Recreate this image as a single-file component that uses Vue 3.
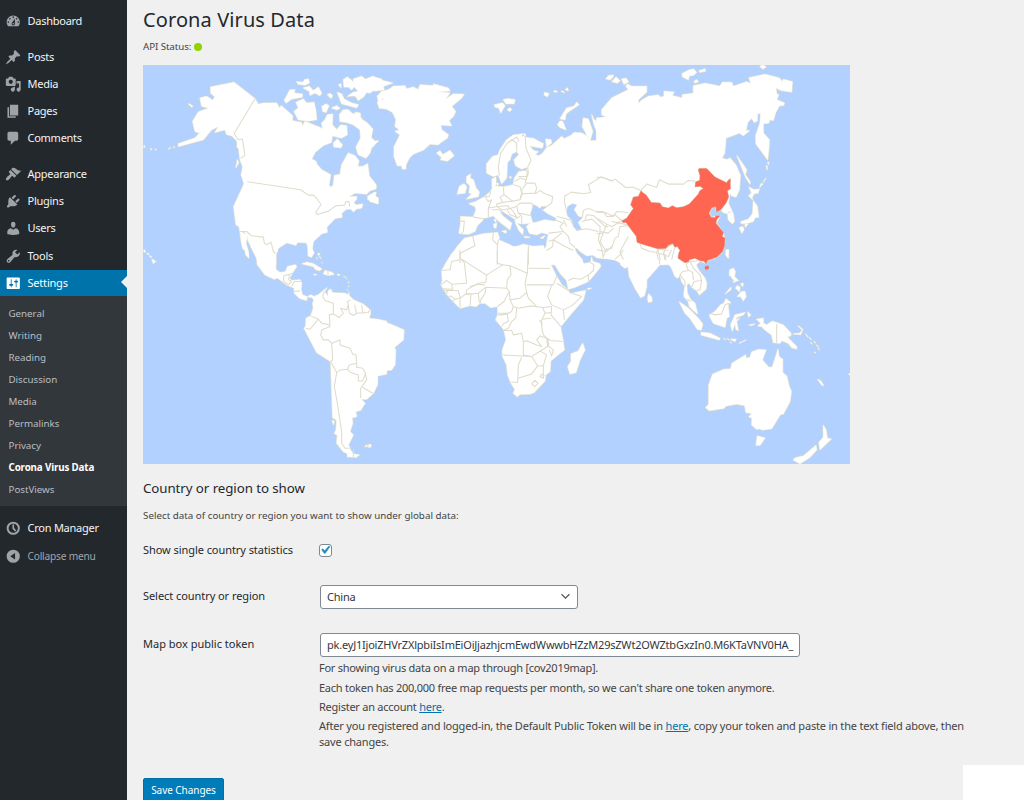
<script setup>
const icons = {
  dashboard: 'M3.76 16h12.48c1.1-1.37 1.76-3.11 1.76-5 0-4.42-3.58-8-8-8s-8 3.58-8 8c0 1.89.66 3.63 1.76 5zM10 4c.55 0 1 .45 1 1s-.45 1-1 1-1-.45-1-1 .45-1 1-1zM6 6c.55 0 1 .45 1 1s-.45 1-1 1-1-.45-1-1 .45-1 1-1zm8 0c.55 0 1 .45 1 1s-.45 1-1 1-1-.45-1-1 .45-1 1-1zm-5.37 5.55L12 7v6c0 1.1-.9 2-2 2s-2-.9-2-2c0-.57.24-1.08.63-1.45zM4 10c.55 0 1 .45 1 1s-.45 1-1 1-1-.45-1-1 .45-1 1-1zm12 0c.55 0 1 .45 1 1s-.45 1-1 1-1-.45-1-1 .45-1 1-1zm-5 3c0-.55-.45-1-1-1s-1 .45-1 1 .45 1 1 1 1-.45 1-1z',
  post: 'M10.44 3.02l1.82-1.82 6.36 6.35-1.83 1.82c-1.05-.68-2.48-.57-3.41.36l-.75.75c-.92.93-1.04 2.35-.35 3.41l-1.83 1.82-2.41-2.41-2.8 2.79c-.42.42-3.38 2.71-3.8 2.29s1.86-3.39 2.28-3.81l2.79-2.79L4.1 9.36l1.83-1.82c1.05.69 2.48.57 3.4-.36l.75-.75c.93-.92 1.05-2.35.36-3.41z',
  media: 'M13 11V4c0-.55-.45-1-1-1h-1.67L9 1H5L3.67 3H2c-.55 0-1 .45-1 1v7c0 .55.45 1 1 1h10c.55 0 1-.45 1-1zM7 4.5c1.38 0 2.5 1.12 2.5 2.5S8.38 9.5 7 9.5 4.5 8.38 4.5 7 5.62 4.5 7 4.5zM14 6h5v10.5c0 1.38-1.12 2.5-2.5 2.5S14 17.88 14 16.5s1.12-2.5 2.5-2.5c.17 0 .34.02.5.05V9h-3V6zm-4 8.05V13h2v3.5c0 1.38-1.12 2.5-2.5 2.5S7 17.88 7 16.5 8.12 14 9.5 14c.17 0 .34.02.5.05z',
  page: 'M6 15V2h10v13H6zm-1 1h8v2H3V5h2v11z',
  comment: 'M5 2h9c1.1 0 2 .9 2 2v7c0 1.1-.9 2-2 2h-2l-5 5v-5H5c-1.1 0-2-.9-2-2V4c0-1.1.9-2 2-2z',
  appearance: 'M14.48 11.06L7.41 3.99l1.5-1.5c.5-.56 2.3-.47 3.51.32 1.21.8 1.43 1.28 2.91 2.1 1.18.64 2.45 1.26 4.45.85zm-.71.71L6.7 4.7 4.93 6.47c-.39.39-.39 1.02 0 1.41l1.06 1.06c.39.39.39 1.03 0 1.42-.6.6-1.43 1.11-2.21 1.69-.35.26-.7.53-1.01.84C1.43 14.23.4 16.08 1.4 17.07c.99 1 2.84-.03 4.18-1.36.31-.31.58-.66.85-1.02.57-.78 1.08-1.61 1.69-2.21.39-.39 1.02-.39 1.41 0l1.06 1.06c.39.39 1.02.39 1.41 0z',
  plugin: 'M13.11 4.36L9.87 7.6 8 5.73l3.24-3.24c.35-.34 1.05-.2 1.56.32.52.51.66 1.21.31 1.55zm-8 1.77l.91-1.12 9.01 9.01-1.19.84c-.71.71-2.63 1.16-3.82 1.16H6.14L4.9 17.26c-.59.59-1.54.59-2.12 0-.59-.58-.59-1.53 0-2.12l1.24-1.24v-3.88c0-1.13.4-3.19 1.09-3.89zm7.26 3.97l3.24-3.24c.34-.35 1.04-.21 1.55.31.52.51.66 1.21.31 1.55l-3.24 3.25z',
  user: 'M10 9.25c-2.27 0-2.73-3.44-2.73-3.44C7 4.02 7.82 2 9.97 2c2.16 0 2.98 2.02 2.71 3.81 0 0-.41 3.44-2.68 3.44zm0 2.57L12.72 10c2.39 0 4.52 2.33 4.52 4.53v2.49s-3.65 1.13-7.24 1.13c-3.65 0-7.24-1.13-7.24-1.13v-2.49c0-2.25 1.94-4.48 4.47-4.48z',
  tools: 'M16.68 9.77c-1.34 1.34-3.3 1.67-4.95.99l-5.41 6.52c-.99.99-2.59.99-3.58 0s-.99-2.59 0-3.57l6.52-5.42c-.68-1.65-.35-3.61.99-4.95 1.28-1.28 3.12-1.62 4.72-1.06l-2.89 2.89 2.82 2.82 2.86-2.87c.53 1.58.18 3.39-1.08 4.65zM3.81 16.21c.4.39 1.04.39 1.43 0 .4-.4.4-1.04 0-1.43-.39-.4-1.03-.4-1.43 0-.39.39-.39 1.03 0 1.43z',
  settings: 'M18 16V4c0-.55-.45-1-1-1H3c-.55 0-1 .45-1 1v12c0 .55.45 1 1 1h14c.55 0 1-.45 1-1zM8 11h1c.55 0 1 .45 1 1s-.45 1-1 1H8v1.5c0 .28-.22.5-.5.5s-.5-.22-.5-.5V13H6c-.55 0-1-.45-1-1s.45-1 1-1h1V5.5c0-.28.22-.5.5-.5s.5.22.5.5V11zm5-2h-1c-.55 0-1-.45-1-1s.45-1 1-1h1V5.5c0-.28.22-.5.5-.5s.5.22.5.5V7h1c.55 0 1 .45 1 1s-.45 1-1 1h-1v5.5c0 .28-.22.5-.5.5s-.5-.22-.5-.5V9z',
  clock: 'M10 2a8 8 0 1 0 0 16 8 8 0 0 0 0-16zm0 2.4a5.6 5.6 0 1 1 0 11.2 5.6 5.6 0 0 1 0-11.2zM9 5.5h2v4l2.6 3.1-1.4 1.4-3.2-3.5z',
  collapse: 'M10 2a8 8 0 1 0 0 16 8 8 0 0 0 0-16zm2.2 4.2v7.6L6.4 10z',
}
const groups = [
  [{ icon: 'dashboard', label: 'Dashboard' }],
  [
    { icon: 'post', label: 'Posts' },
    { icon: 'media', label: 'Media' },
    { icon: 'page', label: 'Pages' },
    { icon: 'comment', label: 'Comments' },
  ],
  [
    { icon: 'appearance', label: 'Appearance' },
    { icon: 'plugin', label: 'Plugins' },
    { icon: 'user', label: 'Users' },
    { icon: 'tools', label: 'Tools' },
    { icon: 'settings', label: 'Settings', active: true },
  ],
]
const submenu = ['General', 'Writing', 'Reading', 'Discussion', 'Media', 'Permalinks', 'Privacy', 'Corona Virus Data', 'PostViews']

// The world map is drawn in six tiles; each tile's units are thirds of a pixel.
const tiles = [
  {
    x: 140, y: 60,
    land: [
      'M212,82 282,68 345,117 355,134 370,130 410,130 418,145 424,138 458,168 457,183 485,188 487,200 495,185 540,203 548,208 545,190 555,180 562,165 578,163 577,195 590,210 602,196 620,198 622,225 604,235 577,228 574,248 550,257 525,278 515,298 527,304 532,315 545,330 572,345 567,375 573,383 580,375 583,347 600,344 605,315 625,280 645,288 657,304 653,320 668,320 683,312 688,350 708,376 708,386 690,392 680,403 645,400 625,412 650,410 650,418 640,430 650,436 668,433 665,445 650,447 640,456 633,448 620,448 605,460 606,472 585,476 560,502 562,517 545,522 520,545 517,565 521,580 514,592 505,588 503,560 500,549 472,547 468,556 440,549 415,565 408,582 408,615 356,615 352,600 323,540 322,525 312,515 300,515 297,500 288,495 281,440 308,382 312,372 304,345 308,320 300,300 296,265 290,243 275,228 260,224 255,210 225,218 235,200 215,210 205,222 190,240 115,260 115,252 165,235 183,215 176,219 165,215 158,185 175,157 207,145 185,140 180,115 200,110 218,122 225,112 212,100z',
      'M300,515 304,548 308,565 315,572 318,585 326,594 325,580 318,550 322,525z',
      'M303,343 323,357 322,370 310,357z M292,300 296,308 288,324z M293,240 298,268 291,262z',
      'M145,132 157,138 156,143z M12,258 15,260 12,264z M32,267 36,268 32,270z M46,268 49,269 46,271z M86,267 92,264 86,268z M100,262 104,261 101,263z',
      'M470,66 490,68 493,60 505,58 508,70 495,76 475,74z M490,85 508,80 520,93 535,82 545,100 540,108 525,100 510,107 508,95z',
      'M433,122 450,90 465,90 462,100 487,103 487,112 455,118 438,130z M468,128 490,118 500,130 522,128 527,150 530,180 505,184 475,180 462,155 475,145z',
      'M562,105 570,101 578,108 573,116z M546,140 558,133 567,138 558,158 548,155z M575,145 590,138 600,146 590,150z',
      'M592,98 605,103 612,118 635,130 655,135 650,144 605,132z M596,75 603,72 603,84z M610,60 622,52 635,62 645,78 635,90 625,82 612,82z',
      'M640,58 665,50 680,62 700,52 725,58 725,90 705,88 690,100 680,98 670,112 655,122 645,108 622,110 640,98 655,95 640,78z',
      'M598,165 610,150 625,150 637,162 655,162 667,180 682,190 698,208 690,230 705,245 715,244 696,260 690,280 678,295 655,285 648,262 662,235 660,210 640,195 620,188 600,185z M645,158 660,160 662,168 650,166z',
      'M580,250 592,238 607,255 603,264 582,262z M682,418 708,397 706,410 715,415 714,432 698,424z',
      'M712,108 725,110 725,145 716,135z',
      'M12,570 16,574 13,576z M22,580 26,582 23,584z M30,588 34,591 31,592z M534,580 538,584 535,587z',
    ],
    borders: ['M345,117 L282,222 L295,240 L307,238 L315,286 L302,296', 'M322,366 L482,390 L505,406 L520,406 L530,416 L543,434 L527,458 L532,464 L565,454 L588,438 L614,436 L617,426 L627,425 L629,441', 'M300,515 L320,515 L335,528 L370,532 L373,550 L382,554 L393,547 L400,575 L408,581'],
  },
  {
    x: 370, y: 60,
    land: [
      'M-20,62 8,50 35,62 68,70 40,80 42,90 15,94 -10,85z M-20,195 0,200 8,210 3,235 15,245 24,243 8,262 -20,240z M-20,330 0,352 18,375 18,387 0,392 -20,400z M-8,410 15,397 14,410 24,415 24,432 0,425z',
      'M35,95 55,90 70,80 105,78 110,88 130,82 145,90 150,75 190,78 190,73 235,85 240,94 198,96 240,100 225,120 250,103 282,104 275,115 245,140 257,155 250,170 237,182 245,198 212,196 215,210 235,225 232,235 210,250 205,255 180,253 160,271 130,283 118,295 108,315 107,328 97,328 95,318 82,318 72,290 72,262 90,225 75,215 88,210 75,200 78,180 68,158 50,148 28,145 22,128 42,118 22,110z',
      'M200,280 210,273 218,285 240,272 252,288 232,304 212,300 215,293z',
      'M350,340 350,312 368,290 384,286 390,270 410,240 430,226 465,222 468,233 490,236 520,252 517,265 498,262 478,258 490,272 505,276 495,285 507,288 520,278 530,263 545,257 575,230 583,237 605,226 612,218 635,220 650,228 660,243 680,243 680,215 672,195 665,165 672,180 692,188 696,175 710,172 695,160 715,128 730,120 730,594 700,595 690,592 668,585 650,587 632,575 620,563 613,565 622,588 634,598 640,612 640,615 535,615 520,570 530,560 530,550 535,523 515,518 500,525 478,520 470,500 478,492 500,487 525,480 555,485 560,475 535,462 515,448 530,442 527,438 508,444 504,440 490,432 480,462 485,480 488,489 462,492 440,490 460,510 458,524 447,512 437,490 435,478 415,465 398,455 388,455 400,470 425,490 420,510 385,483 370,468 355,472 340,475 337,483 322,497 315,515 295,523 275,522 267,520 272,490 272,470 310,472 318,450 315,440 297,432 318,425 345,410 362,395 370,378 400,382 430,375 433,355 440,345 447,335 470,333 473,322 455,328 437,318 432,300 447,285 440,275 425,283 420,300 412,308 410,355 395,372 385,345 370,350z',
      'M366,382 366,358 378,352 378,375z M380,370 386,372 382,377z M438,350 443,344 447,352z M419,350 424,352 421,356z',
      'M655,178 640,175 637,200 650,225 660,243 668,215z',
      'M527,238 543,240 545,250 530,260z',
      'M290,350 302,343 300,355 310,360 318,385 328,397 325,410 290,418 305,402 297,398 300,378 290,368z M262,403 268,380 282,372 290,380 285,400z',
      'M373,135 398,130 405,138 392,160 387,145 375,142z M400,120 412,117 435,120 432,132 408,132z M412,150 420,144 425,150 418,155z',
      'M522,105 525,98 537,102 532,111z M551,96 556,92 562,97z M573,95 580,95 583,99z M586,90 592,84 595,93z',
      'M570,177 590,145 612,140 620,128 627,135 602,152 588,162 585,180z M563,195 570,184 578,185 588,210 570,203z',
      'M372,480 378,478 377,487z M371,493 380,490 378,505 372,503z M396,514 409,512 408,520z M463,529 480,532 465,534z M512,534 525,528 518,536z',
      'M708,57 722,50 722,60z',
      'M225,615 235,598 262,560 283,535 308,530 340,522 383,518 388,535 385,540 420,555 435,565 440,560 460,553 490,560 520,557 530,590 543,615z',
    ],
    seas: ['M590,455 593,440 607,432 620,435 612,450 625,470 638,473 624,488 635,508 620,512 610,500 606,482 592,468z', 'M513,440 530,442 515,452z'],
    borders: ['M388,347 L385,320 L392,280 L412,250 L425,240 L440,250 L440,275 M412,250 L440,232 L447,245 M455,230 L460,225 L466,232 L468,265 L483,302 L473,322', 'M272,484 L283,484 L280,515 L274,522 M310,472 L340,477', 'M345,410 L355,425 L365,420 L355,445 L380,440 L380,433 L398,428 L390,412 L402,405 L400,383 M362,395 L358,410 L345,410 M402,405 L428,424 L450,420 L455,400 L450,380 L430,375', 'M398,428 L415,425 L428,424 M385,440 L415,438 L418,447 L395,450 L380,440 M418,447 L440,440 L450,430 L485,430 L490,445 M440,440 L445,460 L485,468 M420,445 L430,455 L440,472 L420,465 L412,450 M445,460 L455,470 L455,490 M435,478 L450,470', 'M450,420 L457,402 L500,400 L510,392 L525,402 L548,410 L545,430 L530,440 M457,402 L455,390 L470,370 L495,370 L500,385 L495,402 M434,365 L450,355 L468,360 L472,340 L470,333 M445,350 L470,350', 'M473,322 L475,340 L465,370 M355,445 L355,472 M365,450 L385,450 L400,455', 'M590,455 L583,425 L585,408 L605,397 L640,402 L662,398 L655,375 L693,352 L730,364', 'M637,473 L640,452 L655,445 L680,457 L705,458 L730,470 M645,480 L650,465 L670,467 L705,500 L715,500 M635,485 L665,478 L690,500 L690,515 L715,520 L730,505 M690,515 L685,540 L695,565 L700,595 M620,512 L650,507 L685,515', 'M555,480 L580,490 L570,500 L580,515 L595,530 L600,550 L615,563 M535,520 L580,515 M560,470 L600,480 L610,495 M580,480 L590,500 M535,545 L550,540 L575,520 M550,540 L585,560 L610,572 M530,572 L548,560 L550,540', 'M308,530 L315,558 L270,580 L270,610 M370,518 L368,540 L382,555 L382,615 M385,540 L382,555 M475,558 L475,615'],
  },
  {
    x: 600, y: 60,
    land: [
      'M-10,175 20,172 5,165 5,150 35,115 85,90 78,80 82,73 95,80 140,80 140,97 115,120 115,132 125,122 145,110 175,106 182,113 192,110 192,95 222,97 217,108 247,115 247,105 280,101 280,78 315,71 360,80 367,68 395,68 400,80 440,66 453,72 447,54 495,44 538,55 548,66 550,59 577,66 575,97 542,92 528,84 530,103 536,105 530,120 553,130 551,137 538,138 527,158 520,182 510,180 506,190 490,192 490,220 508,240 507,262 503,300 468,253 467,228 480,190 482,160 472,163 472,183 463,188 455,175 443,188 438,212 448,213 430,228 418,220 378,235 374,280 366,295 380,300 390,295 408,316 421,347 418,390 408,412 395,408 390,400 385,430 400,463 403,485 397,492 385,480 383,462 370,458 362,450 350,455 345,440 335,445 328,460 335,473 350,468 360,468 350,490 370,520 375,545 368,575 350,592 322,602 318,610 300,603 288,614 75,615 62,613 60,608 45,600 15,595 -10,593z',
      'M246,42 265,32 280,28 290,38 280,47 268,48 265,60 248,52z M297,33 316,27 316,35 300,38z M282,65 290,60 295,66 285,70z M480,20 490,16 498,22 488,28z',
      'M18,58 25,48 40,46 38,54z M36,66 48,52 60,63 52,70z M65,58 78,56 86,66 72,74z',
      'M411,288 440,330 436,345 450,365 450,373 438,355z M447,382 462,390 478,388 474,400 462,402 456,413 458,420 446,408 455,400z M460,423 472,440 476,472 465,473 460,485 442,490 425,492 422,486 445,478 458,462z M418,504 428,500 432,508 426,520z M435,494 444,492 436,502z',
      'M497,356 490,368z M484,371 488,373 479,382z M503,308 507,308 505,314z M499,318 502,320 501,330z M379,572 386,570 383,594 377,585z',
    ],
    borders: ['M-10,353 L5,352 L35,364 L45,358 L78,384 L98,382 L123,392 L140,373 L170,383 L178,360 L205,373 L250,373 L265,362 L285,364', 'M362,452 L375,432 L385,415 M383,460 L392,455', 'M-10,455 L10,455 L20,470 L40,470 L50,455 L85,458 M30,468 L45,465 L60,478 L66,480 M-10,475 L20,493 L35,500 L45,495 L66,482 M20,493 L10,520 L-10,522 M10,520 L0,545 L15,570 L35,565 L45,535 L55,530 L60,500 L85,498 M35,485 L60,490 L80,495 M85,530 L60,575 L70,600', 'M120,553 L125,565 L150,575 L170,577 L175,567 M175,567 L195,567 L218,551 M170,577 L175,600 M190,575 L195,600 M178,568 L205,572 M218,551 L225,560 L215,600'],
    china: 'M66,483 80,475 100,446 92,435 100,412 115,410 123,393 130,400 138,405 154,428 180,430 187,441 205,445 217,438 230,444 250,441 268,433 295,403 300,392 310,387 302,380 285,381 287,366 299,362 300,348 295,330 297,326 320,326 345,352 380,369 384,362 391,357 391,388 382,393 386,411 378,430 362,450 350,457 347,440 335,444 327,460 333,472 345,474 347,468 360,468 350,480 348,490 370,518 367,530 375,535 374,555 368,575 350,592 322,602 318,612 312,604 300,603 285,595 268,600 266,606 255,609 234,595 236,580 240,572 232,560 225,562 218,551 205,556 198,565 173,567 120,551 111,547 109,530 85,498 78,488 68,488z M315,620 325,618 327,625 320,630 315,627z',
  },
  {
    x: 140, y: 250,
    land: [
      'M338,0 350,20 352,45 375,75 403,88 412,84 440,105 463,115 463,130 478,145 500,152 503,142 515,142 522,150 518,160 520,175 512,198 498,205 497,230 492,235 530,308 572,335 578,503 590,510 588,540 583,550 592,556 590,580 610,605 625,612 630,595 625,585 640,555 630,545 638,520 636,503 650,500 647,485 662,481 675,460 663,447 680,448 700,430 712,405 712,378 740,372 740,214 716,209 688,206 690,180 670,163 640,150 625,135 615,130 578,129 572,118 564,123 564,140 553,125 561,114 535,135 522,140 512,135 502,141 487,135 483,120 485,100 480,90 455,92 448,85 458,68 470,50 466,45 443,50 436,66 420,68 408,60 405,20 412,5 412,-10 333,-10z',
      'M314,-10 318,15 326,24 325,5 320,-10z M505,0 515,0 522,8 514,21 505,18z',
      'M486,42 500,37 520,42 545,57 540,62 528,60 520,50z M550,72 555,62 575,67 582,73 565,77z M521,73 530,74 524,76z M592,73 600,75 594,77z M625,132 628,134 624,135z',
      'M36,28 47,35 40,41z M12,2 16,7 12,6z M22,11 26,14z M29,19 34,21z M577,512 583,513 580,524z',
      'M622,610 630,598 640,612 658,615 648,622 622,620z M674,590 680,585 682,589z M684,592 693,584 690,590z',
      'M611,79 615,81z M618,84 620,87z M625,96 627,99z M625,108 627,110z M621,119 623,121z M626,127 628,130z M535,11 540,13z M530,24 532,27z M538,20 543,26z M545,38 547,40z',
    ],
    borders: ['M430,95 L432,78 L448,73 L458,70 M448,73 L446,90 L455,95 M432,95 L445,105 L455,95 M455,110 L463,95 L483,95 M463,125 L480,123 M500,152 L505,140 M564,62 L564,77', 'M553,125 L548,140 L555,152 L580,160 L580,192 L568,195 L570,230 L545,240 L542,255 L550,270 L565,270 L575,280 L578,330 L572,335', 'M512,198 L535,208 L510,238 L497,235 M535,208 L545,220 L570,225 M580,192 L597,203 L610,190 L602,175 L620,180 L625,165 L622,155 L632,150 M625,165 L628,190 L640,197 L650,190 L645,175 L645,165 M650,190 L685,188 L690,178 M665,165 L668,190', 'M575,280 L600,270 L600,285 L630,295 L638,312 L648,315 L650,340 L628,345 L622,358 L602,360 L590,368 L572,335 M590,368 L583,410 L592,460 L605,545 L605,580 L615,595 L628,595', 'M622,358 L632,368 L655,375 L655,393 L668,393 L677,370 L668,355 L650,352 L650,340 M677,375 L680,390 L662,415 L662,445 M668,412 L698,430 M640,598 L640,622'],
  },
  {
    x: 370, y: 250,
    land: [
      'M-20,207 15,208 60,222 102,240 100,270 73,293 77,300 75,345 65,360 45,362 22,378 22,403 8,430 -5,435 -20,350z M-6,584 3,584 2,592z M-6,180 1,180 1,196 -6,196z',
      'M262,0 245,12 235,30 215,62 217,92 213,105 228,130 245,150 270,175 300,167 318,170 330,160 345,160 362,173 383,170 383,195 377,210 390,225 402,240 408,270 397,300 397,318 410,345 413,375 423,400 435,418 430,430 442,440 450,433 480,432 492,428 525,393 527,375 540,365 542,333 560,318 583,300 578,265 573,240 572,230 605,190 640,150 647,122 630,125 600,132 592,118 575,105 560,80 540,40 525,10 520,-10 262,-10z',
      'M528,-10 525,5 540,20 555,45 570,70 590,92 595,118 615,112 655,95 675,72 692,50 690,42 668,35 665,22 662,38 640,42 636,28 620,10 610,-10z',
      'M615,-10 632,5 650,17 668,15 680,23 700,25 740,22 740,-10z',
      'M638,280 645,300 630,330 618,368 600,372 593,350 603,335 603,312 625,303z M652,116 664,115 656,119z',
    ],
    borders: ['M382,0 L382,40 L398,45 L350,75 L347,97 L325,100 L290,120 L288,132 L300,132 M270,0 L270,25 L350,76 M215,62 L240,60 L245,35 L270,30 M283,38 L290,100 L245,103 M283,38 L270,25 M398,45 L420,48 L472,70 L475,0 M475,55 L540,56 M420,48 L423,75 L412,90 L410,115 L348,112 L345,130 L332,150 L332,160', 'M213,105 L230,92 L245,103 L248,118 L218,117 M218,123 L235,122 L225,135 M235,122 L265,122 L270,145 L255,148 L242,138 L232,145 M255,148 L248,155 M288,132 L270,145 L270,175 M300,167 L303,132 L325,130 L328,160 M288,132 L303,132 M325,130 L348,112 M300,110 L325,103 L345,105', 'M410,115 L418,125 L402,155 L383,170 M418,125 L420,150 L430,170 M420,150 L450,145 L470,128 L465,100 L472,70 M470,128 L475,145 L498,168 M430,170 L445,175 L485,168 L518,173 L545,170 M383,190 L415,190 L425,185 L430,170 M383,195 L395,195 L412,192 L415,215 L402,220 L395,230 M440,175 L437,205 L425,215 L415,235 L402,240', 'M470,105 L550,105 L560,78 M545,105 L533,140 L545,165 L580,180 L605,168 L635,140 L605,130 M560,100 L595,122 M545,170 L543,195 L573,230 M518,173 L525,190 L515,210 L515,230 L520,255 L530,265 L542,272 L578,275 M525,190 L543,188 M515,208 L543,205 M508,210 L518,225 M580,180 L583,210', 'M402,242 L425,242 L430,255 L455,250 L460,275 L472,273 L500,285 L515,290 L500,270 L510,258 L530,265 L533,290 L500,310 L485,320 L460,315 L460,275 M397,315 L485,320 L503,348 L520,347 L530,315 L510,303 M455,322 L445,345 L443,397 L423,397 M445,385 L485,372 L503,348 M533,265 L537,290 L550,300 L545,318 L538,300 M520,347 L520,385 L510,380 L515,373 L524,378', 'M485,402 L495,391 L504,400 L494,410z', 'M595,92 L610,85 L632,88 L655,75 L670,62 L672,45 M655,75 L655,95 M662,38 L672,45 M700,20 L710,-5'],
  },
  {
    x: 600, y: 250,
    land: [
      'M-10,-10 370,-10 368,5 345,25 320,33 317,40 300,33 288,45 295,60 315,85 320,100 318,118 298,135 290,122 275,112 268,100 260,105 262,130 272,150 285,160 293,192 280,182 268,170 265,155 252,140 252,130 255,110 245,95 240,75 233,85 225,80 215,55 198,32 188,45 180,42 175,50 140,90 140,110 133,138 122,143 105,115 88,80 84,50 75,55 62,45 65,38 45,30 15,25 -10,22z',
      'M146,132 155,142 156,155 145,157 143,145z M378,0 385,0 386,25 378,12z',
      'M238,156 265,175 295,205 308,222 304,240 292,238 270,205 255,190z M304,247 330,250 360,265 358,270 320,260 303,255z',
      'M371,266 377,269z M382,266 388,270z M392,268 408,268 405,275z M418,280 438,270 428,275z M390,276 395,279z',
      'M328,195 345,185 362,165 372,160 378,147 392,158 384,165 388,200 380,205 375,232 340,220 332,205z',
      'M405,195 435,188 430,195 410,202 408,212 418,205 410,215 415,242 408,238 405,220 397,243 392,225z M443,186 452,195 446,201z M447,225 465,222 455,227z',
      'M389,60 400,55 406,65 403,80 415,92 405,95 388,75z M376,132 393,112 392,120z M412,107 420,112 418,125 407,115z M412,140 425,125 435,125 438,140 430,153 422,140z M422,102 430,100 428,110z M398,95 405,98z',
      'M470,208 490,205 490,220 500,225 517,214 550,225 573,250 572,258 562,260 570,270 590,290 590,297 575,293 565,280 545,272 540,280 520,278 515,255 495,240 485,230 474,228 482,220z',
      'M580,252 600,250 607,240 594,228 608,238 602,254z M617,252 624,262z M628,262 634,270z M632,278 637,282z M642,275 648,279z M650,285 656,292z M654,295 658,300z M643,307 648,309z',
      'M475,299 498,300 487,330 506,352 517,352 534,298 537,320 548,328 548,368 560,378 567,408 574,425 570,455 550,492 541,494 515,536 486,540 480,536 470,538 455,525 456,505 447,500 456,490 438,488 434,467 410,462 378,468 372,475 328,482 317,473 326,463 326,405 338,373 372,358 392,357 396,340 437,315 438,325 450,323 455,306z',
      'M472,558 495,564 480,586 468,586z M653,388 663,394 671,407 665,405z M746,372 756,370 756,380z',
      'M670,526 678,540 682,565 694,567 660,599 657,577 670,562z M648,586 650,600 630,622 600,641 580,630 585,624 610,618z',
    ],
    borders: ['M258,42 L265,62 L248,65 L240,75 L255,95 L255,110 M260,42 L270,35 L280,55 L300,75 L305,92 L282,95 L275,112 M265,60 L278,68 L280,90 M270,35 L298,33 M305,92 L300,120 L290,122 M262,148 L272,155 M330,190 L345,195 L365,192 L375,165 L388,160 M530,222 L530,278', 'M173,0 L180,25 L178,42 M175,10 L195,15 L198,32 M195,0 L190,15 L205,20 L215,0 M-10,0 L20,5 L35,-10 M45,28 L60,15 L70,0'],
  },
]
</script>

<template>
  <div class="screen">
    <aside class="sidebar">
      <ul v-for="(group, i) in groups" :key="i" class="menu">
        <li v-for="item in group" :key="item.label" class="item" :class="{ active: item.active }">
          <svg class="icon" viewBox="0 0 20 20"><path fill-rule="evenodd" :d="icons[item.icon]" /></svg>
          <span>{{ item.label }}</span>
        </li>
      </ul>
      <ul class="submenu">
        <li v-for="s in submenu" :key="s" :class="{ current: s === 'Corona Virus Data' }">{{ s }}</li>
      </ul>
      <ul class="menu last">
        <li class="item cron">
          <svg class="icon" viewBox="0 0 20 20"><path fill-rule="evenodd" :d="icons.clock" /></svg>
          <span>Cron Manager</span>
        </li>
        <li class="item collapse">
          <svg class="icon" viewBox="0 0 20 20"><path fill-rule="evenodd" :d="icons.collapse" /></svg>
          <span>Collapse menu</span>
        </li>
      </ul>
    </aside>
    <main class="content">
      <h1>Corona Virus Data</h1>
      <p class="status">API Status: <i class="dot"></i></p>
      <svg class="map" viewBox="143 65.33 707 398.67" preserveAspectRatio="none">
        <g class="coast">
          <g v-for="(t, i) in tiles" :key="i" :transform="`translate(${t.x} ${t.y}) scale(.33333)`">
            <path v-for="(d, j) in t.land" :key="j" :d="d" />
          </g>
        </g>
        <g class="land">
          <g v-for="(t, i) in tiles" :key="i" :transform="`translate(${t.x} ${t.y}) scale(.33333)`">
            <path v-for="(d, j) in t.land" :key="j" :d="d" />
          </g>
        </g>
        <g v-for="(t, i) in tiles" :key="i" :transform="`translate(${t.x} ${t.y}) scale(.33333)`">
          <path v-for="(d, j) in t.seas || []" :key="'s' + j" class="sea" :d="d" />
          <path v-for="(d, j) in t.borders" :key="'b' + j" class="border" :d="d" />
          <path v-if="t.china" class="china" :d="t.china" />
        </g>
      </svg>
      <h2>Country or region to show</h2>
      <p class="intro">Select data of country or region you want to show under global data:</p>
      <div class="row row-check">
        <label>Show single country statistics</label>
        <span class="checkbox"><svg viewBox="0 0 20 20"><path d="M14.83 4.89l1.34.94-5.81 8.38H9.02L5.78 9.67l1.34-1.25 2.57 2.4z" /></svg></span>
      </div>
      <div class="row row-select">
        <label>Select country or region</label>
        <div class="field select"><span>China</span><svg viewBox="0 0 20 20"><path d="M5 6l5 5 5-5 2 1-7 7-7-7 2-1z" /></svg></div>
      </div>
      <div class="row row-token">
        <label>Map box public token</label>
        <div class="help">
          <div class="field token"><span>pk.eyJ1IjoiZHVrZXlpbiIsImEiOiJjazhjcmEwdWwwbHZzM29sZWt2OWZtbGxzIn0.M6KTaVNV0HA_</span></div>
          <p>For showing virus data on a map through [cov2019map].</p>
          <p class="limit">Each token has 200,000 free map requests per month, so we can't share one token anymore.</p>
          <p>Register an account <a>here</a>.</p>
          <p class="steps">After you registered and logged-in, the Default Public Token will be in <a>here</a>, copy your token and paste in the text field above, then<br>save changes.</p>
        </div>
      </div>
      <button class="save">Save Changes</button>
      <div class="blank"></div>
    </main>
  </div>
</template>

<style>
body { overflow: hidden; background: #f0f0f0; }
</style>
<style scoped>
* { box-sizing: border-box; }
.screen { display: flex; width: 1024px; height: 800px; overflow: hidden; background: #f0f0f0; font: 11px/16px "Noto Sans", "Open Sans", sans-serif; color: #444; }
ul { list-style: none; margin: 0; padding: 0; }
p, h1, h2 { margin: 0; white-space: nowrap; }
.sidebar { width: 127px; flex: none; background: #23282d; padding-top: 7.5px; }
.menu + .menu { margin-top: 9px; }
.item { display: flex; align-items: center; height: 27px; padding-left: 5px; gap: 6px; color: #f4f4f4; white-space: nowrap; letter-spacing: -0.26px; }
.menu:nth-child(3) .item:nth-child(4) { height: 28px; padding-top: 1px; }
.icon { width: 16.5px; height: 16.5px; fill: #9ea3a8; flex: none; }
.item.active { position: relative; height: 26.5px; padding-top: .5px; background: #0073aa; color: #fff; letter-spacing: -0.2px; }
.active .icon { fill: #fff; }
.active::after { content: ""; position: absolute; right: 0; top: 6.5px; border: 6.5px solid transparent; border-right-color: #f0f0f0; border-left-width: 0; }
.submenu { background: #32373c; height: 210px; padding: 7px 0 0 8.5px; }
.submenu li { height: 22px; line-height: 22px; font-size: 9.8px; color: #b9bec3; white-space: nowrap; letter-spacing: -0.03px; }
.submenu .current { color: #fff; font-weight: 700; letter-spacing: -0.15px; }
.submenu + .menu { margin-top: 0; padding-top: 8.5px; }
.cron { letter-spacing: -0.24px; }
.collapse { color: #a0a5aa; font-size: 10.2px; margin-top: 1px; letter-spacing: -0.22px; }
.content { position: relative; flex: 1; min-width: 0; padding: 6px 0 0 16px; }
h1 { font-size: 20px; line-height: 27px; font-weight: 400; color: #23282d; letter-spacing: 0.1px; }
.status { display: flex; align-items: center; gap: 3px; margin-top: 6px; font-size: 9.8px; line-height: 15px; letter-spacing: -0.1px; }
.dot { width: 8px; height: 8px; border-radius: 50%; background: #8fd400; }
.map { display: block; width: 707px; height: 399px; margin-top: 11px; background: #b3d1ff; }
.coast path { fill: #fff; stroke: #dddcc8; stroke-width: 4.6; stroke-linejoin: round; }
.land path { fill: #fff; stroke: #fff; stroke-width: 1.2; stroke-linejoin: round; }
.border { fill: none; stroke: #dfdccb; stroke-width: 3.2; stroke-linejoin: round; }
.sea { fill: #b3d1ff; stroke: #dddcc8; stroke-width: 1.5; }
.china { fill: #ff6652; stroke: #cf8c74; stroke-width: 1.5; }
h2 { margin-top: 14px; font-size: 13.3px; line-height: 20px; font-weight: 400; color: #23282d; letter-spacing: -0.07px; }
.intro { margin-top: 10px; font-size: 9.8px; line-height: 16px; }
.row { display: flex; }
.row label { width: 177px; flex: none; line-height: 16px; font-size: 11px; color: #23282d; white-space: nowrap; letter-spacing: -0.06px; }
.row-token label { letter-spacing: 0; }
.row-check { margin-top: 18px; height: 42.5px; }
.checkbox { width: 13px; height: 13px; border: 1px solid #7e8993; border-radius: 3px; background: #fff; margin-top: 2px; margin-left: -1px; display: flex; align-items: center; justify-content: center; }
.checkbox svg { width: 16px; height: 16px; margin: -3px -2px -2px -3px; flex: none; fill: #1e8cbe; stroke: #1e8cbe; stroke-width: .6; }
.field { height: 24px; border: 1px solid #7e8993; border-radius: 3px; background: #fff; color: #32373c; display: flex; align-items: center; padding: 0 5px 0 6px; white-space: nowrap; letter-spacing: -0.21px; }
.row-select { height: 48px; }
.row-select label, .row-token label { padding-top: 3px; }
.select { width: 258px; justify-content: space-between; letter-spacing: -0.2px; }
.select svg { width: 13px; height: 13px; fill: #555; }
.token { width: 480px; }
.help p { margin: 3px 0 0 -1px; font-size: 11px; letter-spacing: -0.25px; }
.help a { color: #0073aa; text-decoration: underline; }
.help .limit { margin-top: 4px; }
.help .steps { width: 645px; letter-spacing: -0.19px; }
.save { display: block; margin: 28px 0 0; padding: 0; width: 81px; height: 24px; border: 1px solid #0071a1; border-radius: 2px; background: #007cba; color: #fff; font: 10px/22px "Noto Sans", sans-serif; letter-spacing: -0.05px; white-space: nowrap; }
.blank { position: absolute; right: 0; bottom: 0; width: 61px; height: 35px; background: #fff; }
</style>
